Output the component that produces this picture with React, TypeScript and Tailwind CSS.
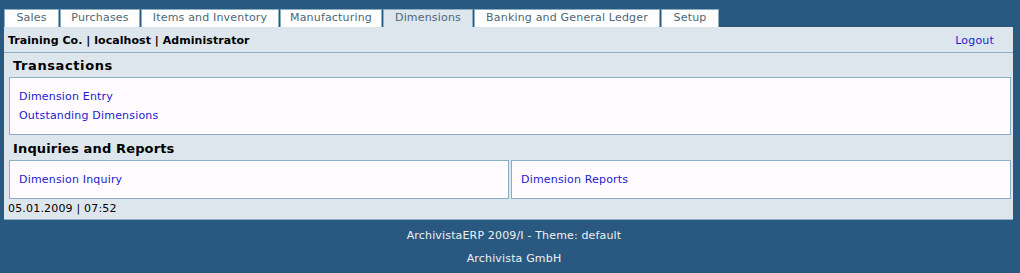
import React from 'react';

const tabs: { label: string; w: string }[] = [
    { label: 'Sales', w: 'w-[55px]' },
    { label: 'Purchases', w: 'w-[80px]' },
    { label: 'Items and Inventory', w: 'w-[138px]' },
    { label: 'Manufacturing', w: 'w-[102px]' },
    { label: 'Dimensions', w: 'w-[90px]' },
    { label: 'Banking and General Ledger', w: 'w-[186px]' },
    { label: 'Setup', w: 'w-[58px]' },
];

function LinkBox({ links, className }: { links: string[]; className?: string }) {
    return (
        <div className={`shrink-0 bg-[#fffbff] border border-[#8aafc0] px-[9px] ${className ?? ''}`}>
            {links.map(l => (
                <div key={l} className="h-[19px] leading-[19px]">
                    <a className="text-[#1a1acc] text-[11px] tracking-[0.18px]" href="#">{l}</a>
                </div>
            ))}
        </div>
    );
}

export default function App() {
    return (
        <div className="w-[1020px] h-[273px] bg-[#295981] font-['DejaVu_Sans',sans-serif] pt-[9px]">
            <div className="flex pl-[4px] h-[18px]">
                {tabs.map(t => (
                    <div
                        key={t.label}
                        className={`${t.w} mr-[1px] border border-b-0 border-[#8aafc0] text-center text-[11px] tracking-[0.18px] leading-[16px] text-[#4b6776] ${t.label === 'Dimensions' ? 'bg-[#dee6ed]' : 'bg-white'}`}
                    >
                        {t.label}
                    </div>
                ))}
            </div>
            <div className="ml-[4px] w-[1009px] h-[193px] bg-[#dee6ed] border-b border-[#8aafc0] flex flex-col">
                <div className="h-[26px] shrink-0 flex items-center justify-between pt-[3px] pl-[4px] pr-[19px] border-b border-[#8aafc0]">
                    <span className="text-[11px] font-bold text-black tracking-[0.05px]">Training Co. | localhost | Administrator</span>
                    <a className="text-[11px] text-[#1a1acc] tracking-[0.18px]" href="#">Logout</a>
                </div>
                <div className="pl-[5px]">
                    <div className="h-[24px] pl-[4px] pt-[2px] flex items-center text-[13px] font-bold text-black tracking-[0.6px]">Transactions</div>
                    <LinkBox links={['Dimension Entry', 'Outstanding Dimensions']} className="w-[1002px] h-[58px] pt-[7px]" />
                    <div className="h-[25px] pl-[4px] flex items-end pb-[2px] text-[13px] font-bold text-black tracking-[0.15px]">Inquiries and Reports</div>
                    <div className="flex gap-[2px] w-[1002px]">
                        <LinkBox links={['Dimension Inquiry']} className="w-[500px] h-[39px] pt-[7px]" />
                        <LinkBox links={['Dimension Reports']} className="w-[500px] h-[39px] pt-[7px]" />
                    </div>
                </div>
                <div className="pl-[4px] h-[23px] pt-[1px] flex items-center text-[11px] text-black tracking-[0.18px]">05.01.2009 | 07:52</div>
            </div>
            <div className="text-center text-[11px] text-[#f0f0f0] tracking-[0.16px] pl-[8px]">
                <div className="h-[23px] leading-[32px]">ArchivistaERP 2009/I - Theme: default</div>
                <div className="h-[23px] leading-[32px]">Archivista GmbH</div>
            </div>
        </div>
    );
}
